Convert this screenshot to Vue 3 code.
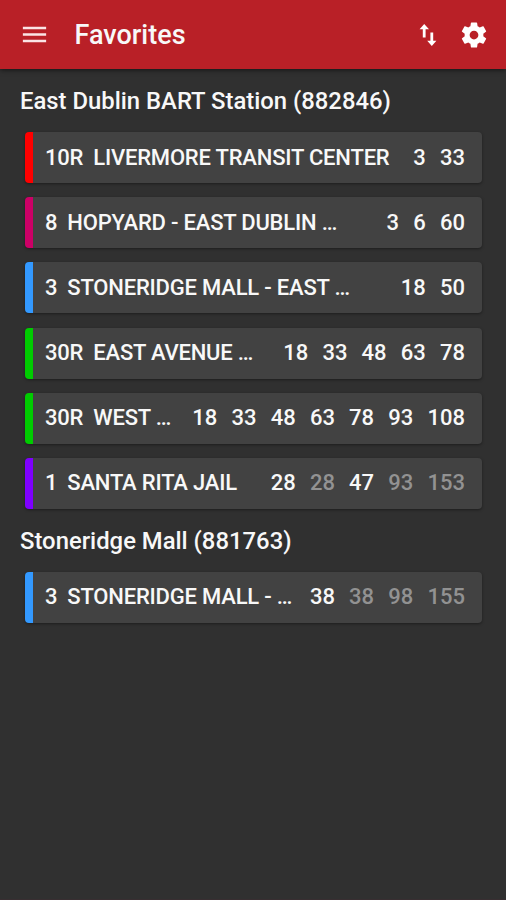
<script setup>
const stops = [
  {
    name: 'East Dublin BART Station (882846)',
    routes: [
      { line: '10R', dest: 'LIVERMORE TRANSIT CENTER', tone: 'red', times: [{ t: 3 }, { t: 33 }] },
      { line: '8', dest: 'HOPYARD - EAST DUBLIN …', tone: 'magenta', times: [{ t: 3 }, { t: 6 }, { t: 60 }] },
      { line: '3', dest: 'STONERIDGE MALL - EAST …', tone: 'blue', times: [{ t: 18 }, { t: 50 }] },
      { line: '30R', dest: 'EAST AVENUE …', tone: 'green', times: [{ t: 18 }, { t: 33 }, { t: 48 }, { t: 63 }, { t: 78 }] },
      { line: '30R', dest: 'WEST …', tone: 'green', times: [{ t: 18 }, { t: 33 }, { t: 48 }, { t: 63 }, { t: 78 }, { t: 93 }, { t: 108 }] },
      { line: '1', dest: 'SANTA RITA JAIL', tone: 'violet', times: [{ t: 28 }, { t: 28, dim: true }, { t: 47 }, { t: 93, dim: true }, { t: 153, dim: true }] },
    ],
  },
  {
    name: 'Stoneridge Mall (881763)',
    routes: [
      { line: '3', dest: 'STONERIDGE MALL - …', tone: 'blue', times: [{ t: 38 }, { t: 38, dim: true }, { t: 98, dim: true }, { t: 155, dim: true }] },
    ],
  },
]
</script>

<template>
  <div class="screen">
    <header class="bar">
      <button class="icon-btn" aria-label="Menu">
        <svg width="31" height="31" viewBox="0 0 24 24"><path d="M3 18h18v-2H3v2zm0-5h18v-2H3v2zm0-7v2h18V6H3z" /></svg>
      </button>
      <h1>Favorites</h1>
      <button class="icon-btn sort" aria-label="Sort">
        <svg width="18" height="24" viewBox="0 0 18 24"><path d="M5.2 1 L10 6.2 H6.6 V14.6 H3.8 V6.2 H0.6 Z M11.4 9.4 H14.2 V17.8 H17.4 L12.8 23 L8.2 17.8 H11.4 Z" /></svg>
      </button>
      <button class="icon-btn" aria-label="Settings">
        <svg width="30" height="30" viewBox="0 0 24 24"><path d="M19.43 12.98c.04-.32.07-.64.07-.98s-.03-.66-.07-.98l2.11-1.65c.19-.15.24-.42.12-.64l-2-3.46c-.12-.22-.39-.3-.61-.22l-2.49 1c-.52-.4-1.08-.73-1.69-.98l-.38-2.65C14.46 2.18 14.25 2 14 2h-4c-.25 0-.46.18-.49.42l-.38 2.65c-.61.25-1.17.59-1.69.98l-2.49-1c-.23-.09-.49 0-.61.22l-2 3.46c-.13.22-.07.49.12.64l2.11 1.65c-.04.32-.07.65-.07.98s.03.66.07.98l-2.11 1.65c-.19.15-.24.42-.12.64l2 3.46c.12.22.39.3.61.22l2.49-1c.52.4 1.08.73 1.69.98l.38 2.65c.03.24.24.42.49.42h4c.25 0 .46-.18.49-.42l.38-2.65c.61-.25 1.17-.59 1.69-.98l2.49 1c.23.09.49 0 .61-.22l2-3.46c.12-.22.07-.49-.12-.64l-2.11-1.65zM12 15.5c-1.93 0-3.5-1.57-3.5-3.5s1.57-3.5 3.5-3.5 3.5 1.57 3.5 3.5-1.57 3.5-3.5 3.5z" /></svg>
      </button>
    </header>
    <main>
      <section v-for="stop in stops" :key="stop.name">
        <h2>{{ stop.name }}</h2>
        <ul>
          <li v-for="(route, i) in stop.routes" :key="i" :class="route.tone">
            <span class="line">{{ route.line }}</span>
            <span class="dest">{{ route.dest }}</span>
            <span class="times">
              <span v-for="(time, j) in route.times" :key="j" :class="{ dim: time.dim }">{{ time.t }}</span>
            </span>
          </li>
        </ul>
      </section>
    </main>
  </div>
</template>

<style>
body {
  margin: 0;
  background: #303030;
}
</style>

<style scoped>
.screen {
  height: 900px;
  overflow: hidden;
  box-sizing: border-box;
  background: #303030;
  border-bottom: 1px solid #382e31;
  color: #f8f8f8;
  font-family: Roboto, "Liberation Sans", sans-serif;
  font-weight: 500;
}
.bar {
  display: flex;
  align-items: center;
  height: 69px;
  box-sizing: border-box;
  padding: 0 17px 0 19px;
  background: #b92027;
  box-shadow: 0 1px 5px rgba(0, 0, 0, 0.6);
}
.icon-btn {
  display: flex;
  padding: 0;
  border: 0;
  background: none;
  color: #fff;
}
.icon-btn:first-child {
  color: #fbe4e5;
}
.icon-btn svg {
  fill: currentColor;
}
.sort {
  margin-right: 22.5px;
}
h1 {
  flex: 1;
  margin: 0 0 0 24.5px;
  font-size: 27px;
  font-weight: 500;
  line-height: 32px;
}
h2 {
  box-sizing: border-box;
  margin: 0;
  padding: 1px 20px 0;
  font-size: 23.85px;
  font-weight: 500;
  line-height: 62px;
  height: 63px;
}
ul {
  display: flex;
  flex-direction: column;
  gap: 14.2px;
  margin: 0;
  padding: 0 24px 0 25px;
  list-style: none;
}
li {
  display: flex;
  align-items: center;
  height: 51px;
  box-sizing: border-box;
  padding: 0 17px 1px 12px;
  border-left: 8px solid var(--tone);
  border-radius: 4px;
  background: #424242;
  box-shadow: 0 1px 3px rgba(0, 0, 0, 0.4);
  font-size: 22px;
  white-space: nowrap;
}
.line {
  margin-right: 10px;
  letter-spacing: -0.2px;
}
.dest {
  letter-spacing: -0.2px;
}
.times {
  display: flex;
  gap: 14.2px;
  margin-left: auto;
}
.dim {
  color: #929292;
}
.red { --tone: #ff0000; }
.magenta { --tone: #cc0066; }
.blue { --tone: #3399ff; }
.green { --tone: #00cc00; }
.violet { --tone: #7f00ff; }
</style>
